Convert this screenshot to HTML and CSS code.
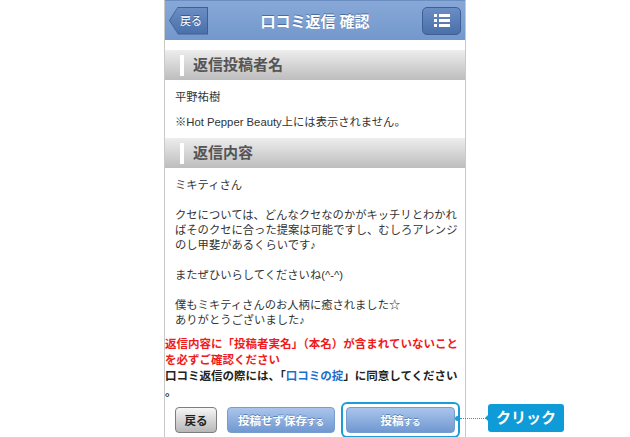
FILE: index.html
```html
<!DOCTYPE html>
<html lang="ja">
<head>
    <meta charset="UTF-8">
    <meta name="viewport" content="width=device-width, initial-scale=1.0">
    <title>口コミ返信 確認</title>
    <link rel="stylesheet" href="styles.css">
</head>
<body>
    <div class="phone">
        <header class="topbar">
            <span class="back-btn"><span class="back-inner">戻る</span></span>
            <h1 class="title">口コミ返信 確認</h1>
            <span class="menu-btn">
                <svg width="16" height="13" viewBox="0 0 16 13">
                    <rect x="0" y="0" width="3" height="3" fill="#fff"/>
                    <rect x="0" y="5" width="3" height="3" fill="#fff"/>
                    <rect x="0" y="10" width="3" height="3" fill="#fff"/>
                    <rect x="5" y="0" width="11" height="3" fill="#fff"/>
                    <rect x="5" y="5" width="11" height="3" fill="#fff"/>
                    <rect x="5" y="10" width="11" height="3" fill="#fff"/>
                </svg>
            </span>
        </header>

        <section class="section">
            <h2 class="sec-head">返信投稿者名</h2>
            <div class="sec-body">
                <p>平野祐樹</p>
                <p>※Hot Pepper Beauty上には表示されません。</p>
            </div>
        </section>

        <section class="section">
            <h2 class="sec-head">返信内容</h2>
            <div class="sec-body reply">
                <p>ミキティさん</p>
                <p>クセについては、どんなクセなのかがキッチリとわかれ<br>ばそのクセに合った提案は可能ですし、むしろアレンジ<br>のし甲斐があるくらいです♪</p>
                <p>またぜひいらしてくださいね(^-^)</p>
                <p>僕もミキティさんのお人柄に癒されました☆<br>ありがとうございました♪</p>
            </div>
        </section>

        <div class="notice">
            <p class="warn">返信内容に「投稿者実名」（本名）が含まれていないこと<br>を必ずご確認ください</p>
            <p class="agree">口コミ返信の際には、「<span class="rule-link">口コミの掟</span>」に同意してください<br>。</p>
        </div>

        <div class="actions">
            <button class="btn btn-gray">戻る</button>
            <button class="btn btn-blue btn-save">投稿せず保存<small>する</small></button>
            <div class="highlight">
                <button class="btn btn-blue btn-post">投稿<small>する</small></button>
                <div class="callout">
                    <span class="dot"></span>
                    <span class="dots-line"></span>
                    <span class="callout-label">クリック</span>
                </div>
            </div>
        </div>
    </div>
</body>
</html>
```

FILE: styles.css
```css
body {
    margin: 0;
    background-color: #fff;
    font-family: "Liberation Sans", "Noto Sans CJK JP", sans-serif;
    color: #333;
}

.phone {
    width: 300px;
    height: 437px;
    margin: 0 auto;
    border-left: 1px solid #c9c9c9;
    border-right: 1px solid #c9c9c9;
    overflow: visible;
}

/* header bar */
.topbar {
    height: 40px;
    display: flex;
    align-items: center;
    justify-content: space-between;
    padding: 0 4px;
    background: linear-gradient(#87a8d7, #7498cc);
    border-top: 1px solid #6b8ec2;
    box-sizing: border-box;
    position: relative;
}

.title {
    position: absolute;
    left: 0;
    right: 0;
    margin: 0;
    text-align: center;
    font-size: 15px;
    font-weight: bold;
    color: #fff;
    text-shadow: 0 -1px 0 #4d6d9e;
    pointer-events: none;
}

.back-btn {
    width: 39px;
    height: 28px;
    padding: 1px;
    box-sizing: border-box;
    background: #3e5f93;
    clip-path: polygon(0 50%, 9px 0, 100% 0, 100% 100%, 9px 100%);
    display: flex;
}

.back-inner {
    flex: 1;
    background: linear-gradient(#6a8dc4, #4a70aa);
    clip-path: polygon(0 50%, 8px 0, 100% 0, 100% 100%, 8px 100%);
    color: #fff;
    font-size: 11px;
    line-height: 26px;
    padding-left: 10px;
    text-shadow: 0 -1px 0 #34568a;
}

.menu-btn {
    width: 39px;
    height: 28px;
    box-sizing: border-box;
    border: 1px solid #3e5f93;
    border-radius: 5px;
    background: linear-gradient(#6a8dc4, #4a70aa);
    display: flex;
    align-items: center;
    justify-content: center;
}

/* sections */
.section {
    margin-top: 10px;
}

.section + .section {
    margin-top: 0;
}

.sec-head {
    position: relative;
    margin: 0;
    height: 30px;
    line-height: 30px;
    padding-left: 28px;
    font-size: 15px;
    font-weight: bold;
    color: #555;
    background: linear-gradient(#ededed, #bdbdbd);
}

.sec-head::before {
    content: "";
    position: absolute;
    left: 15px;
    top: 5px;
    width: 4px;
    height: 21px;
    background-color: #fff;
}

.sec-body {
    padding: 10px 10px 8px;
    font-size: 11.3px;
    line-height: 15px;
}

.sec-body p {
    margin: 0 0 10px;
    white-space: nowrap;
}

.sec-body p:last-child {
    margin-bottom: 0;
}

.reply p {
    margin-bottom: 15px;
}

/* notice */
.notice {
    padding-top: 0;
    font-size: 11.5px;
    font-weight: bold;
    line-height: 16px;
}

.notice p {
    margin: 0;
    white-space: nowrap;
}

.warn {
    color: #f01b1b;
}

.agree {
    color: #222;
}

.rule-link {
    color: #1c6fce;
}

/* buttons */
.actions {
    display: flex;
    align-items: center;
    padding-left: 10px;
    margin-top: 2px;
}

.btn {
    height: 26px;
    border-radius: 4px;
    font-family: inherit;
    font-weight: bold;
    font-size: 11.5px;
    padding: 0;
    cursor: pointer;
}

.btn small {
    font-size: 8.5px;
}

.btn-gray {
    width: 42px;
    background: linear-gradient(#f6f6f6, #b7b7b7);
    border: 1px solid #7d7d7d;
    color: #222;
    margin-right: 10px;
}

.btn-blue {
    background: linear-gradient(#aac5eb, #7098d1);
    border: 1px solid #789ccf;
    color: #fff;
    text-shadow: 0 -1px 0 #5f84bb;
}

.btn-save {
    width: 108px;
    margin-right: 6px;
}

.btn-post {
    width: 109px;
    display: block;
}

.highlight {
    position: relative;
    padding: 3px;
    border: 2px solid #1b9dd8;
    border-radius: 6px;
}

.callout {
    position: absolute;
    left: 100%;
    top: 50%;
    display: flex;
    align-items: center;
    transform: translateY(-50%);
    margin-top: -2px;
}

.dot {
    width: 5px;
    height: 5px;
    border-radius: 50%;
    background-color: #1b9dd8;
    margin-left: -3px;
}

.dots-line {
    width: 28px;
    border-top: 1px dotted #1b9dd8;
}

.callout-label {
    position: relative;
    width: 76px;
    height: 28px;
    line-height: 28px;
    text-align: center;
    border-radius: 3px;
    background-color: #0e9bd7;
    color: #fff;
    font-size: 15px;
    font-weight: bold;
}

.callout-label::before {
    content: "";
    position: absolute;
    left: -3px;
    top: 11px;
    border-top: 3px solid transparent;
    border-bottom: 3px solid transparent;
    border-right: 3px solid #0e9bd7;
}
```
